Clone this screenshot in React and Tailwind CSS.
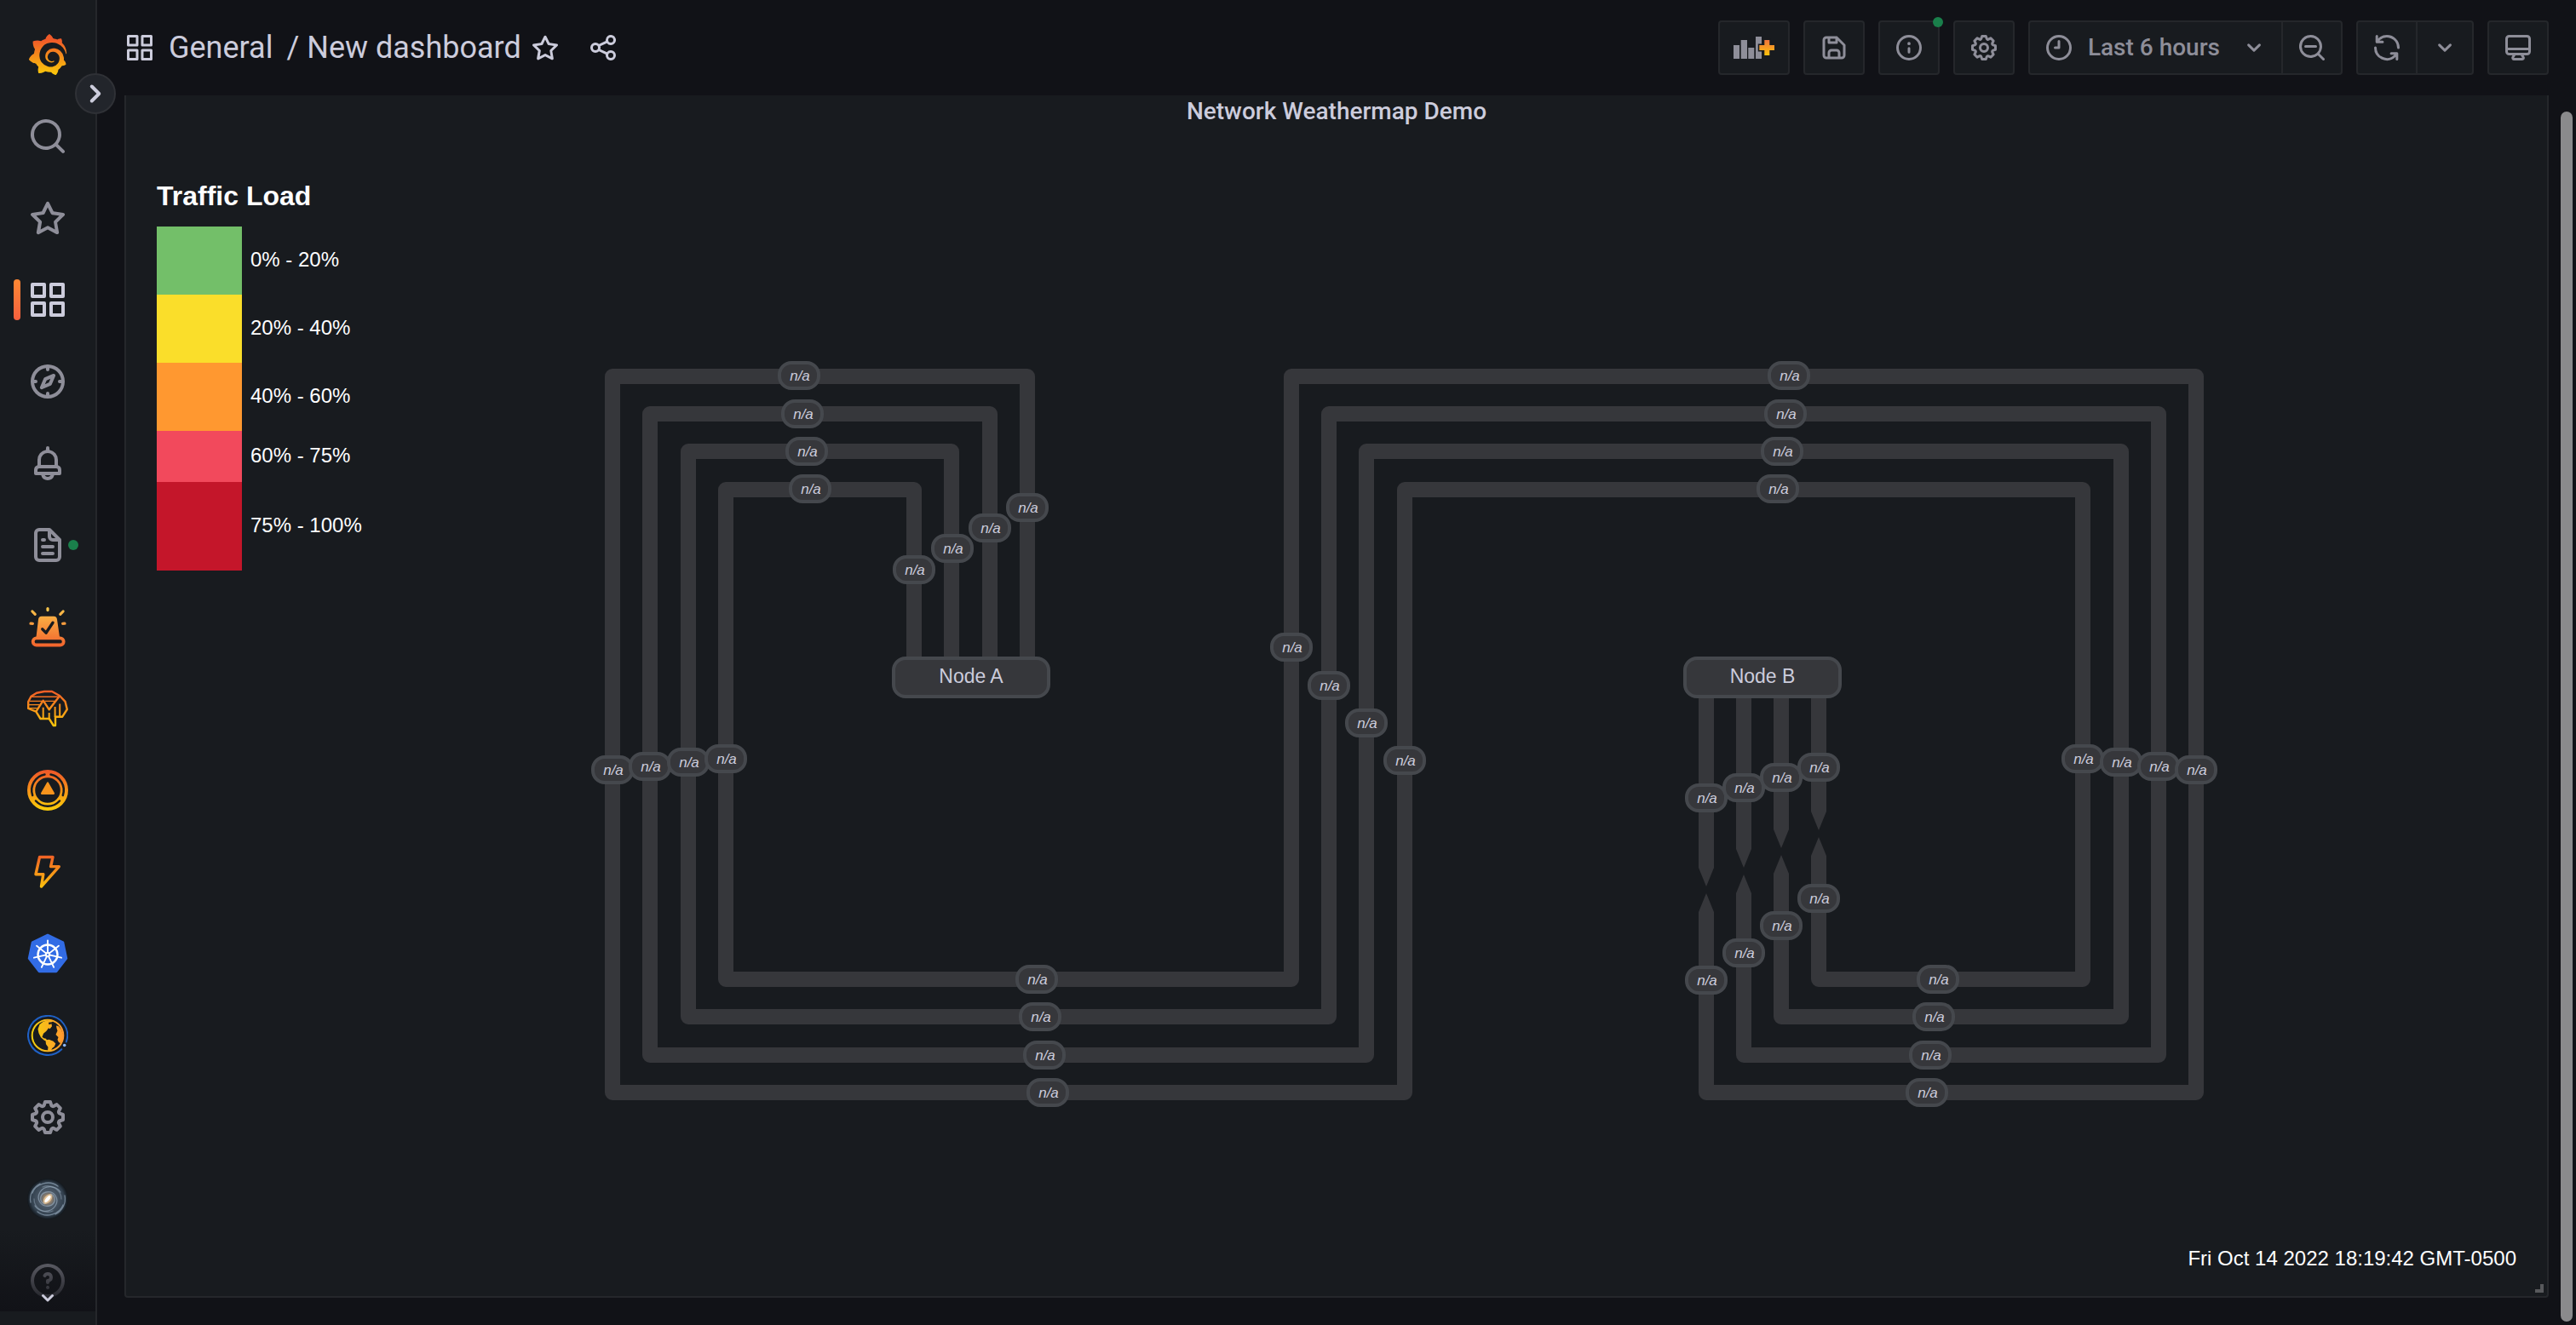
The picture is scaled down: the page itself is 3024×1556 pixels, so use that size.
import React from "react";
import { SiGrafana } from "react-icons/si";

const PATHS = {
  apps: "M10,13H3a1,1,0,0,0-1,1v7a1,1,0,0,0,1,1h7a1,1,0,0,0,1-1V14A1,1,0,0,0,10,13ZM9,20H4V15H9ZM21,2H14a1,1,0,0,0-1,1v7a1,1,0,0,0,1,1h7a1,1,0,0,0,1-1V3A1,1,0,0,0,21,2ZM20,9H15V4h5Zm1,4H14a1,1,0,0,0-1,1v7a1,1,0,0,0,1,1h7a1,1,0,0,0,1-1V14A1,1,0,0,0,21,13Zm-1,7H15V15h5ZM10,2H3A1,1,0,0,0,2,3v7a1,1,0,0,0,1,1h7a1,1,0,0,0,1-1V3A1,1,0,0,0,10,2ZM9,9H4V4H9Z",
  star: "M22,9.67A1,1,0,0,0,21.14,9l-5.69-.83L12.9,3a1,1,0,0,0-1.8,0L8.55,8.16,2.86,9a1,1,0,0,0-.81.68,1,1,0,0,0,.25,1l4.13,4-1,5.68A1,1,0,0,0,6.9,21.44L12,18.77l5.1,2.67a.93.93,0,0,0,.46.12,1,1,0,0,0,.59-.19,1,1,0,0,0,.4-1l-1-5.68,4.13-4A1,1,0,0,0,22,9.67Zm-6.15,4a1,1,0,0,0-.29.88l.72,4.2-3.76-2a1.06,1.06,0,0,0-.94,0l-3.76,2,.72-4.2a1,1,0,0,0-.29-.88l-3-3,4.21-.61a1,1,0,0,0,.76-.55L12,5.7l1.88,3.82a1,1,0,0,0,.76.55l4.21.61Z",
  share: "M18,14a4,4,0,0,0-3.08,1.48l-5.1-2.35a3.64,3.64,0,0,0,0-2.26l5.1-2.35A4,4,0,1,0,14,6a4.17,4.17,0,0,0,.07.71L8.79,9.14a4,4,0,1,0,0,5.72l5.28,2.43A4.17,4.17,0,0,0,14,18a4,4,0,1,0,4-4ZM18,4a2,2,0,1,1-2,2A2,2,0,0,1,18,4ZM6,14a2,2,0,1,1,2-2A2,2,0,0,1,6,14Zm12,6a2,2,0,1,1,2-2A2,2,0,0,1,18,20Z",
  search: "M21.71,20.29,18,16.61A9,9,0,1,0,16.61,18l3.68,3.68a1,1,0,0,0,1.42,0A1,1,0,0,0,21.71,20.29ZM11,18a7,7,0,1,1,7-7A7,7,0,0,1,11,18Z",
  compass: "M12,2A10,10,0,1,0,22,12,10,10,0,0,0,12,2Zm1,17.93V19a1,1,0,0,0-2,0v.93A8,8,0,0,1,4.07,13H5a1,1,0,0,0,0-2H4.07A8,8,0,0,1,11,4.07V5a1,1,0,0,0,2,0V4.07A8,8,0,0,1,19.93,11H19a1,1,0,0,0,0,2h.93A8,8,0,0,1,13,19.93ZM15.14,7.55l-5,2.12a1,1,0,0,0-.52.52l-2.12,5a1,1,0,0,0,.21,1.1,1,1,0,0,0,.7.3.93.93,0,0,0,.4-.09l5-2.12a1,1,0,0,0,.52-.52l2.12-5a1,1,0,0,0-1.31-1.31Zm-2.49,5.1-2.28,1,1-2.28,2.28-1Z",
  bell: "M18,13.18V10a6,6,0,0,0-5-5.91V3a1,1,0,0,0-2,0V4.09A6,6,0,0,0,6,10v3.18A3,3,0,0,0,4,16v2a1,1,0,0,0,1,1H8.14a4,4,0,0,0,7.72,0H19a1,1,0,0,0,1-1V16A3,3,0,0,0,18,13.18ZM8,10a4,4,0,0,1,8,0v3H8Zm4,10a2,2,0,0,1-1.72-1h3.44A2,2,0,0,1,12,20Zm6-3H6V16a1,1,0,0,1,1-1H17a1,1,0,0,1,1,1Z",
  file: "M9,10h1a1,1,0,0,0,0-2H9a1,1,0,0,0,0,2Zm0,2a1,1,0,0,0,0,2h6a1,1,0,0,0,0-2ZM20,8.94a1.31,1.31,0,0,0-.06-.27l0-.09a1.07,1.07,0,0,0-.19-.28h0l-6-6h0a1.07,1.07,0,0,0-.28-.19.32.32,0,0,0-.09,0A.88.88,0,0,0,13.05,2H7A3,3,0,0,0,4,5V19a3,3,0,0,0,3,3H17a3,3,0,0,0,3-3V9S20,9,20,8.94ZM14,5.41,16.59,8H15a1,1,0,0,1-1-1ZM18,19a1,1,0,0,1-1,1H7a1,1,0,0,1-1-1V5A1,1,0,0,1,7,4h5V7a3,3,0,0,0,3,3h3Zm-3-3H9a1,1,0,0,0,0,2h6a1,1,0,0,0,0-2Z",
  cog: "M21.32,9.55l-1.89-.63.89-1.78A1,1,0,0,0,20.13,6L18,3.87a1,1,0,0,0-1.15-.19l-1.78.89-.63-1.89A1,1,0,0,0,13.5,2h-3a1,1,0,0,0-.95.68L8.92,4.57,7.14,3.68A1,1,0,0,0,6,3.87L3.87,6a1,1,0,0,0-.19,1.15l.89,1.78-1.89.63A1,1,0,0,0,2,10.5v3a1,1,0,0,0,.68.95l1.89.63-.89,1.78A1,1,0,0,0,3.87,18L6,20.13a1,1,0,0,0,1.15.19l1.78-.89.63,1.89a1,1,0,0,0,.95.68h3a1,1,0,0,0,.95-.68l.63-1.89,1.78.89A1,1,0,0,0,18,20.13L20.13,18a1,1,0,0,0,.19-1.15l-.89-1.78,1.89-.63A1,1,0,0,0,22,13.5v-3A1,1,0,0,0,21.32,9.55ZM20,12.78l-1.2.4A2,2,0,0,0,17.64,16l.57,1.14-1.1,1.1L16,17.64a2,2,0,0,0-2.79,1.16l-.4,1.2H11.22l-.4-1.2A2,2,0,0,0,8,17.64l-1.14.57-1.1-1.1L6.36,16A2,2,0,0,0,5.2,13.18L4,12.78V11.22l1.2-.4A2,2,0,0,0,6.36,8L5.79,6.89l1.1-1.1L8,6.36A2,2,0,0,0,10.82,5.2l.4-1.2h1.56l.4,1.2A2,2,0,0,0,16,6.36l1.14-.57,1.1,1.1L17.64,8a2,2,0,0,0,1.16,2.79l1.2.4ZM12,8a4,4,0,1,0,4,4A4,4,0,0,0,12,8Zm0,6a2,2,0,1,1,2-2A2,2,0,0,1,12,14Z",
  info: "M12,2A10,10,0,1,0,22,12,10,10,0,0,0,12,2Zm0,18a8,8,0,1,1,8-8A8,8,0,0,1,12,20Zm0-8.5a1,1,0,0,0-1,1v3a1,1,0,0,0,2,0v-3A1,1,0,0,0,12,11.5Zm0-4a1.25,1.25,0,1,0,1.25,1.25A1.25,1.25,0,0,0,12,7.5Z",
  save: "m20.71 9.29-6-6a1 1 0 0 0-.32-.21A1.09 1.09 0 0 0 14 3H6a3 3 0 0 0-3 3v12a3 3 0 0 0 3 3h12a3 3 0 0 0 3-3v-8a1 1 0 0 0-.29-.71ZM9 5h4v2H9Zm6 14H9v-3a1 1 0 0 1 1-1h4a1 1 0 0 1 1 1Zm4-1a1 1 0 0 1-1 1h-1v-3a3 3 0 0 0-3-3h-4a3 3 0 0 0-3 3v3H6a1 1 0 0 1-1-1V6a1 1 0 0 1 1-1h1v3a1 1 0 0 0 1 1h6a1 1 0 0 0 1-1V6.41l4 4Z",
  clock: "M12,2A10,10,0,1,0,22,12,10,10,0,0,0,12,2Zm0,18a8,8,0,1,1,8-8A8,8,0,0,1,12,20ZM12,6a1,1,0,0,0-1,1v4H9a1,1,0,0,0,0,2h3a1,1,0,0,0,1-1V7A1,1,0,0,0,12,6Z",
  zoomOut: "M21.71,20.29,18,16.61A9,9,0,1,0,16.61,18l3.68,3.68a1,1,0,0,0,1.42,0A1,1,0,0,0,21.71,20.29ZM11,18a7,7,0,1,1,7-7A7,7,0,0,1,11,18Zm4-8H7a1,1,0,0,0,0,2h8a1,1,0,0,0,0-2Z",
  sync: "M19.91,15.51H15.38a1,1,0,0,0,0,2h2.4A8,8,0,0,1,4,12a1,1,0,0,0-2,0,10,10,0,0,0,16.88,7.23V21a1,1,0,0,0,2,0V16.5A1,1,0,0,0,19.91,15.51ZM12,2A10,10,0,0,0,5.12,4.77V3a1,1,0,0,0-2,0V7.5a1,1,0,0,0,1,1h4.5a1,1,0,0,0,0-2H6.22A8,8,0,0,1,20,12a1,1,0,0,0,2,0A10,10,0,0,0,12,2Z",
  down: "M17,9.17a1,1,0,0,0-1.41,0L12,12.71,8.46,9.17a1,1,0,0,0-1.41,0,1,1,0,0,0,0,1.42l4.24,4.24a1,1,0,0,0,1.42,0L17,10.59A1,1,0,0,0,17,9.17Z",
  right: "M14.83,11.29,10.59,7.05a1,1,0,0,0-1.42,0,1,1,0,0,0,0,1.41L12.71,12,9.17,15.54a1,1,0,0,0,0,1.41,1,1,0,0,0,.71.29,1,1,0,0,0,.71-.29l4.24-4.24A1,1,0,0,0,14.83,11.29Z",
  monitor: "M19,2H5A3,3,0,0,0,2,5V15a3,3,0,0,0,3,3H7.64l-.58,1a2,2,0,0,0,0,2,2,2,0,0,0,1.75,1h6.46A2,2,0,0,0,17,21a2,2,0,0,0,0-2l-.59-1H19a3,3,0,0,0,3-3V5A3,3,0,0,0,19,2ZM8.77,20,10,18H14l1.2,2ZM20,15a1,1,0,0,1-1,1H5a1,1,0,0,1-1-1V14H20Zm0-3H4V5A1,1,0,0,1,5,4H19a1,1,0,0,1,1,1Z",
  help: "M11.29,15.29a1.58,1.58,0,0,0-.12.15.76.76,0,0,0-.09.18.64.64,0,0,0-.06.18,1.36,1.36,0,0,0,0,.2.84.84,0,0,0,.08.38.9.9,0,0,0,.54.54.94.94,0,0,0,.76,0,.9.9,0,0,0,.54-.54A1,1,0,0,0,13,16a1,1,0,0,0-.29-.71A1,1,0,0,0,11.29,15.29ZM12,2A10,10,0,1,0,22,12,10,10,0,0,0,12,2Zm0,18a8,8,0,1,1,8-8A8,8,0,0,1,12,20ZM12,7A3,3,0,0,0,9.4,8.5a1,1,0,1,0,1.73,1A1,1,0,0,1,12,9a1,1,0,0,1,0,2,1,1,0,0,0-1,1v1a1,1,0,0,0,2,0v-.18A3,3,0,0,0,12,7Z",
};

function Icon({ name, className = "size-9" }) {
  return (
    <svg viewBox="0 0 24 24" fill="currentColor" aria-hidden="true" className={className}>
      <path d={PATHS[name]} />
    </svg>
  );
}

/* Shared vertical gradients for the coloured app icons. */
function Gradients() {
  return (
    <svg className="absolute size-0" aria-hidden="true">
      <defs>
        <linearGradient id="flame" gradientUnits="userSpaceOnUse" x1="0" y1="2" x2="0" y2="46">
          <stop offset="0" stopColor="#f05a28" />
          <stop offset="1" stopColor="#fbca0a" />
        </linearGradient>
        <linearGradient id="logo" x1="0" y1="0" x2="0" y2="1">
          <stop offset="0.15" stopColor="#f05a28" />
          <stop offset="1" stopColor="#fbca0a" />
        </linearGradient>
        <linearGradient id="siren" gradientUnits="userSpaceOnUse" x1="0" y1="0" x2="0" y2="48">
          <stop offset="0" stopColor="#fac64b" />
          <stop offset="1" stopColor="#f2622c" />
        </linearGradient>
        <linearGradient id="plus" x1="0" y1="0" x2="0" y2="1">
          <stop offset="0" stopColor="#f0743c" />
          <stop offset="1" stopColor="#fcc30b" />
        </linearGradient>
        <linearGradient id="globe" gradientUnits="userSpaceOnUse" x1="5" y1="0" x2="43" y2="0">
          <stop offset="0" stopColor="#f5d00c" />
          <stop offset="1" stopColor="#ff9830" />
        </linearGradient>
        <radialGradient id="galaxy">
          <stop offset="0" stopColor="#fff3dc" />
          <stop offset="0.15" stopColor="#a58c70" />
          <stop offset="0.38" stopColor="#4d5a68" />
          <stop offset="0.8" stopColor="#33414f" />
          <stop offset="1" stopColor="#11161b" />
        </radialGradient>
      </defs>
    </svg>
  );
}

const art = { viewBox: "0 0 48 48", className: "size-12", "aria-hidden": true };

function SirenIcon() {
  return (
    <svg {...art} fill="none" strokeLinecap="round" strokeLinejoin="round">
      <g stroke="url(#siren)" strokeWidth="3.2">
        <path d="M5.9 6l3.3 3.4M42.1 6l-3.3 3.4M4 20.2l2.4.1M44 20.2l-2.4.1" />
      </g>
      <path d="M24 2.6v2" stroke="#fac64b" strokeWidth="3.2" />
      <path d="M13 15.5a4 4 0 0 1 4-3.8h14a4 4 0 0 1 4 3.8L38 36H10.500z" fill="url(#siren)" />
      <rect x="6.700" y="37.300" width="36" height="8.200" rx="4.100" fill="#181b1f" stroke="url(#siren)" strokeWidth="3.8" />
      <path d="M17.800 26.800l4.200 4.400 8-12" stroke="#181b1f" strokeWidth="3.400" />
    </svg>
  );
}

function BrainIcon() {
  return (
    <svg {...art} fill="none" stroke="url(#flame)" strokeWidth="2.4" strokeLinejoin="round">
      <path d="M1.200 16L4.500 9.800 11 5.800 20 4h9l9 5 6.500 6.800L46.800 25l-5.600 8.700H33V44h-2.200L25.700 36H15.500l-5.200-8.300L1.200 24z" />
      <path d="M10.300 27.700L18.700 14.700 25.700 25.300 38 9.300" />
      <path d="M18.700 22.700V35M25.700 29v7M32.600 22v12M38.200 18.500V34" strokeWidth="2" />
      <path d="M5 10.200h32M2.500 15.400h15M20.500 15.400h12M1.500 19.600h13M1.500 23.600l10 0" strokeWidth="1.400" />
    </svg>
  );
}

function TargetIcon() {
  return (
    <svg {...art} fill="none">
      <circle cx="24" cy="24" r="19.400" stroke="url(#flame)" strokeWidth="9.200" />
      <g stroke="#181b1f" strokeWidth="2.500" strokeLinecap="round">
        <path d="M27.500 5.500A18.800 18.800 0 0 1 41.800 30" />
        <path d="M20.500 5.500A18.800 18.800 0 0 0 6.200 30" />
        <path d="M10 36.500A18.800 18.800 0 0 0 38 36.500" />
      </g>
      <path d="M24 15.500l-7 12.300h14z" fill="#f7941d" stroke="#f7941d" strokeWidth="2.200" strokeLinejoin="round" />
    </svg>
  );
}

function BoltIcon() {
  return (
    <svg {...art} fill="none" stroke="url(#flame)" strokeWidth="3.4" strokeLinejoin="round">
      <path d="M14.500 6.500H30L27.600 17.600h9.700L16.500 41l2.300-14.300H10z" />
    </svg>
  );
}

function KubernetesIcon() {
  const spokes = [0, 1, 2, 3, 4, 5, 6];
  return (
    <svg {...art} fill="none">
      <path d="M24 2L42 10.600 46 29.500 34 45H14L2 29.500 6 10.600z" fill="#326ce5" stroke="#326ce5" strokeWidth="2.500" strokeLinejoin="round" />
      <circle cx="24" cy="25" r="11.500" stroke="#fff" strokeWidth="2.400" />
      <circle cx="24" cy="25" r="3.200" fill="#fff" />
      {spokes.map((n) => (
        <path key={n} d="M24 22V8.500" stroke="#fff" strokeWidth="1.900" strokeLinecap="round" transform={`rotate(${(n * 360) / 7} 24 25)`} />
      ))}
      <circle cx="24" cy="25" r="1.100" fill="#326ce5" />
    </svg>
  );
}

function GlobeIcon() {
  return (
    <svg {...art} fill="none">
      <path d="M45.800 31.500A23 23 0 1 0 40.300 40.200" stroke="#1f60c4" strokeWidth="2" strokeLinecap="round" />
      <circle cx="43.700" cy="35.500" r="1.800" fill="#8ab8ff" />
      <circle cx="24" cy="24" r="18.300" stroke="url(#globe)" strokeWidth="2" />
      <g fill="url(#globe)">
        <path d="M12.500 16.500L14.500 11 19 7.500 25 6.300h6l-2 2-4 .5.500 2.500 3-1 .5 3-2.500 3-1.500-1-2.500 3.500-3.500 3-1.500 4 2 1.500 2.500.500 2 3.500-4-1.500-4-3.500-2.500-5z" />
        <path d="M34 12.500l2.500.5L40 17l2 6-.5 6-2.500 4-2-1-1.500-3 1-3-3-3 2-4.500-1-3z" />
        <path d="M21.500 29.500l4-.8 5 2 2.800 2.800-1.500 3.500-2.500 2-1.300 2.500-4 .2.500-4-2.500-3.500z" />
      </g>
    </svg>
  );
}

function GalaxyIcon() {
  return (
    <svg {...art} fill="none">
      <circle cx="24" cy="24" r="24" fill="url(#galaxy)" />
      <g stroke="#9fb3c5" strokeOpacity="0.6" strokeWidth="1.300" strokeLinecap="round">
        <path d="M28 18c6 3 6 12-2 14-10 2-16-8-11-16 5-8 18-9 24 0" />
        <path d="M20 30c-6-3-6-12 2-14 10-2 16 8 11 16-5 8-18 9-24 0" />
        <path d="M6 17C10 6 26 1 36 9M42 31C38 42 22 47 12 39M44 20c2 9-3 18-11 22M4 28C2 19 7 10 15 6" />
        <path d="M18 10c10-4 22 3 22 14M30 38C20 42 8 35 8 24" strokeOpacity="0.4" />
      </g>
      <ellipse cx="24" cy="24" rx="7" ry="4" fill="#e9c79a" fillOpacity="0.8" transform="rotate(-50 24 24)" />
      <ellipse cx="24" cy="24" rx="5" ry="2" fill="#fff" transform="rotate(-50 24 24)" />
    </svg>
  );
}

function AddPanelIcon() {
  return (
    <svg viewBox="0 0 48 36" className="h-9 w-12" aria-hidden="true">
      <path d="M0 15h7v16H0zM8.700 9h7.300v22H8.700zM17.300 18h7v13h-7zM26 5h7v26h-7z" fill="currentColor" />
      <path d="M36.300 9h6v6h6v6h-6v6h-6v-6h-6v-6h6z" fill="#181b1f" stroke="#181b1f" strokeWidth="3" />
      <path d="M36.300 9h6v6h6v6h-6v6h-6v-6h-6v-6h6z" fill="url(#plus)" />
    </svg>
  );
}

const navItems = [
  { label: "Search", icon: <Icon name="search" className="size-12" /> },
  { label: "Starred", icon: <Icon name="star" className="size-12" /> },
  { label: "Dashboards", icon: <Icon name="apps" className="size-12" />, active: true },
  { label: "Explore", icon: <Icon name="compass" className="size-12" /> },
  { label: "Alerting", icon: <Icon name="bell" className="size-12" /> },
  { label: "Reports", icon: <Icon name="file" className="size-12" />, dot: true },
  { label: "Incident", icon: <SirenIcon /> },
  { label: "Machine Learning", icon: <BrainIcon /> },
  { label: "OnCall", icon: <TargetIcon /> },
  { label: "Synthetics", icon: <BoltIcon /> },
  { label: "Kubernetes", icon: <KubernetesIcon /> },
  { label: "Worldmap", icon: <GlobeIcon /> },
  { label: "Configuration", icon: <Icon name="cog" className="size-12" /> },
  { label: "Profile", icon: <GalaxyIcon /> },
  { label: "Help", icon: <Icon name="help" className="size-12" /> },
];

function Sidebar() {
  return (
    <aside className="relative z-10 flex h-full w-[114px] shrink-0 flex-col border-r-2 border-[#25272b] bg-[#181b1f] pt-10 pb-4 text-[#8e8e99]">
      <a href="#home" aria-label="Home" className="mb-6 flex shrink-0 justify-center">
        <SiGrafana size={48} fill="url(#logo)" />
      </a>
      <button aria-label="Expand menu" className="absolute top-[86px] -right-6 flex size-12 items-center justify-center rounded-full border-2 border-[#2f3136] bg-[#22252b] text-[#ccccdc]">
        <Icon name="right" className="size-12 shrink-0" />
      </button>
      <nav className="relative min-h-0 flex-1 overflow-hidden">
        {navItems.map((item) => (
          <a
            key={item.label}
            href={`#${item.label.toLowerCase().replace(" ", "-")}`}
            aria-label={item.label}
            className={`relative flex h-24 items-center justify-center ${item.active ? "text-[#ccccdc]" : ""}`}
          >
            {item.active && <span className="absolute top-6 left-4 h-12 w-2 rounded bg-linear-to-b from-[#ff8833] to-[#f55f3e]" />}
            {item.icon}
            {item.dot && <span className="absolute top-[42px] left-20 size-3 rounded-full bg-[#1a7f4b]" />}
          </a>
        ))}
        <div className="absolute inset-x-0 bottom-0 flex h-24 items-end justify-center bg-linear-to-b from-transparent to-[#111217] text-[#ccccdc]">
          <svg viewBox="0 0 16 32" className="h-8 w-4" fill="none" stroke="currentColor" strokeWidth="3" strokeLinecap="round" strokeLinejoin="round" aria-hidden="true">
            <path d="M2.500 13.500L8 19l5.500-5.500" />
          </svg>
        </div>
      </nav>
    </aside>
  );
}

const box = "flex h-16 items-center justify-center rounded border-2 border-[#25272b] bg-[#181b1f] px-4";

function Header() {
  return (
    <header className="flex h-28 shrink-0 items-center justify-between">
      <div className="flex items-center text-[#ccccdc]">
        <Icon name="apps" />
        <h1 className="ml-4 flex gap-4 text-4xl whitespace-nowrap">
          <a href="#general">General</a>
          <a href="#new-dashboard">/ New dashboard</a>
        </h1>
        <button aria-label="Mark as favorite" className="ml-2.5">
          <Icon name="star" />
        </button>
        <button aria-label="Share dashboard" className="ml-8">
          <Icon name="share" />
        </button>
      </div>
      <div className="flex items-center gap-4 text-[#8e8e99]">
        <button aria-label="Add panel" className={box}>
          <AddPanelIcon />
        </button>
        <button aria-label="Save dashboard" className={box}>
          <Icon name="save" />
        </button>
        <button aria-label="Insights" className={`relative ${box}`}>
          <Icon name="info" />
          <span className="absolute -top-1.5 -right-1.5 size-3 rounded-full bg-[#1a7f4b]" />
        </button>
        <button aria-label="Dashboard settings" className={box}>
          <Icon name="cog" />
        </button>
        <div className="flex h-16 items-stretch rounded border-2 border-[#25272b] bg-[#181b1f]">
          <button className="flex items-center border-r-2 border-[#25272b] pr-3.5 pl-4 text-[28px] font-medium whitespace-nowrap">
            <Icon name="clock" />
            <span className="mr-5.5 ml-4">Last 6 hours</span>
            <Icon name="down" />
          </button>
          <button aria-label="Zoom out" className="flex items-center px-4">
            <Icon name="zoomOut" />
          </button>
        </div>
        <div className="flex h-16 items-stretch rounded border-2 border-[#25272b] bg-[#181b1f]">
          <button aria-label="Refresh" className="flex items-center border-r-2 border-[#25272b] px-4">
            <Icon name="sync" />
          </button>
          <button aria-label="Refresh interval" className="flex items-center px-3.5">
            <Icon name="down" />
          </button>
        </div>
        <button aria-label="Cycle view mode" className={box}>
          <Icon name="monitor" />
        </button>
      </div>
    </header>
  );
}

const LINK = "#36373b";
const EDGE = "#45484d";

/* Each link leaves Node A, wraps around the map and ends at the arrow tips under Node B. */
const links = [
  { a: 1206, top: 442, left: 719, bottom: 1283, mid: 1649, top2: 575, right: 2445, bottom2: 1150, b: 2135, gap: 979 },
  { a: 1162, top: 486, left: 763, bottom: 1239, mid: 1604, top2: 530, right: 2490, bottom2: 1194, b: 2091, gap: 1000 },
  { a: 1117, top: 530, left: 808, bottom: 1194, mid: 1560, top2: 486, right: 2534, bottom2: 1239, b: 2047, gap: 1023 },
  { a: 1073, top: 575, left: 852, bottom: 1150, mid: 1516, top2: 442, right: 2578, bottom2: 1283, b: 2003, gap: 1045 },
];

const labels = [
  [938, 441], [942, 486], [947, 530], [951, 574],
  [1206, 596], [1162, 620], [1118, 644], [1073, 669],
  [719, 904], [763, 900], [808, 895], [852, 891],
  [1230, 1283], [1226, 1239], [1221, 1194], [1217, 1150],
  [1516, 760], [1560, 805], [1604, 849], [1649, 893],
  [2100, 441], [2096, 486], [2092, 530], [2087, 574],
  [2445, 891], [2490, 895], [2534, 900], [2578, 904],
  [2275, 1150], [2270, 1194], [2266, 1239], [2262, 1283],
  [2003, 937], [2047, 925], [2091, 913], [2135, 901],
  [2003, 1151], [2047, 1119], [2091, 1087], [2135, 1055],
];

const nodes = [
  { name: "Node A", x: 1140, y: 796 },
  { name: "Node B", x: 2069, y: 796 },
];

function Weathermap() {
  return (
    <svg viewBox="148 112 2842 1410" className="h-full w-full [grid-area:1/1]" role="img" aria-label="Network weathermap">
      {links.map((l) => (
        <g key={l.a}>
          <path
            d={`M${l.a} 796V${l.top}H${l.left}V${l.bottom}H${l.mid}V${l.top2}H${l.right}V${l.bottom2}H${l.b}V${l.gap + 26}M${l.b} 796V${l.gap - 26}`}
            fill="none"
            stroke={LINK}
            strokeWidth="18"
            strokeLinejoin="round"
          />
          <path
            d={`M${l.b - 9} ${l.gap - 26}h18l-9 22zM${l.b - 9} ${l.gap + 26}h18l-9 -22z`}
            fill={LINK}
          />
        </g>
      ))}
      {labels.map(([x, y]) => (
        <g key={`${x}-${y}`}>
          <rect x={x - 23} y={y - 15} width="46" height="30" rx="14" fill={LINK} stroke={EDGE} strokeWidth="4" />
          <text x={x + 1} y={y + 6} textAnchor="middle" fill="#ccccdc" className="text-[17px] italic">
            n/a
          </text>
        </g>
      ))}
      {nodes.map((n) => (
        <g key={n.name}>
          <rect x={n.x - 91} y={n.y - 23} width="182" height="45" rx="14" fill={LINK} stroke={EDGE} strokeWidth="4" />
          <text x={n.x} y={n.y + 6} textAnchor="middle" fill="#ccccdc" className="text-[23px]">
            {n.name}
          </text>
        </g>
      ))}
    </svg>
  );
}

const scale = [
  { label: "0% - 20%", tone: "h-20 bg-[#73bf69]" },
  { label: "20% - 40%", tone: "h-20 bg-[#fade2a]" },
  { label: "40% - 60%", tone: "h-20 bg-[#ff9830]" },
  { label: "60% - 75%", tone: "h-15 bg-[#f2495c]" },
  { label: "75% - 100%", tone: "h-26 bg-[#c4162a]" },
];

function Legend() {
  return (
    <div className="z-1 self-start justify-self-start pt-[98px] pl-9 text-white [grid-area:1/1]">
      <h3 className="mb-4 text-[32px] leading-10 font-bold">Traffic Load</h3>
      <ul>
        {scale.map((s) => (
          <li key={s.label} className="flex items-center gap-2.5 text-2xl leading-7">
            <span className={`w-25 ${s.tone}`} />
            <span className="pb-0.5">{s.label}</span>
          </li>
        ))}
      </ul>
    </div>
  );
}

export default function App() {
  return (
    <div className="flex h-screen overflow-hidden bg-[#111217] font-['Roboto',sans-serif]">
      <Gradients />
      <Sidebar />
      <main className="flex min-w-0 flex-1 flex-col pb-8 pl-8">
        <Header />
        <section className="grid min-h-0 flex-1 grid-cols-1 grid-rows-1 overflow-hidden rounded-b border-2 border-t-0 border-[#25272b] bg-[#181b1f] font-['Liberation_Sans',Arial,sans-serif]">
          <Weathermap />
          <h2 className="z-1 self-start pt-px text-center font-['Roboto',sans-serif] text-[28px] leading-9 font-medium text-[#ccccdc] [grid-area:1/1]">
            Network Weathermap Demo
          </h2>
          <Legend />
          <time className="z-1 self-end justify-self-end pr-9 pb-7 text-2xl text-white [grid-area:1/1]">Fri Oct 14 2022 18:19:42 GMT-0500</time>
          <span className="z-1 mr-1 mb-1 size-2.5 self-end justify-self-end border-r-4 border-b-4 border-[#58595c] [grid-area:1/1]" />
        </section>
      </main>
      <div className="flex w-8 shrink-0 flex-col items-end pt-[131px] pr-1 pb-1">
        <div className="w-3.5 flex-1 rounded-full bg-[#8a8a8c]" />
      </div>
    </div>
  );
}
